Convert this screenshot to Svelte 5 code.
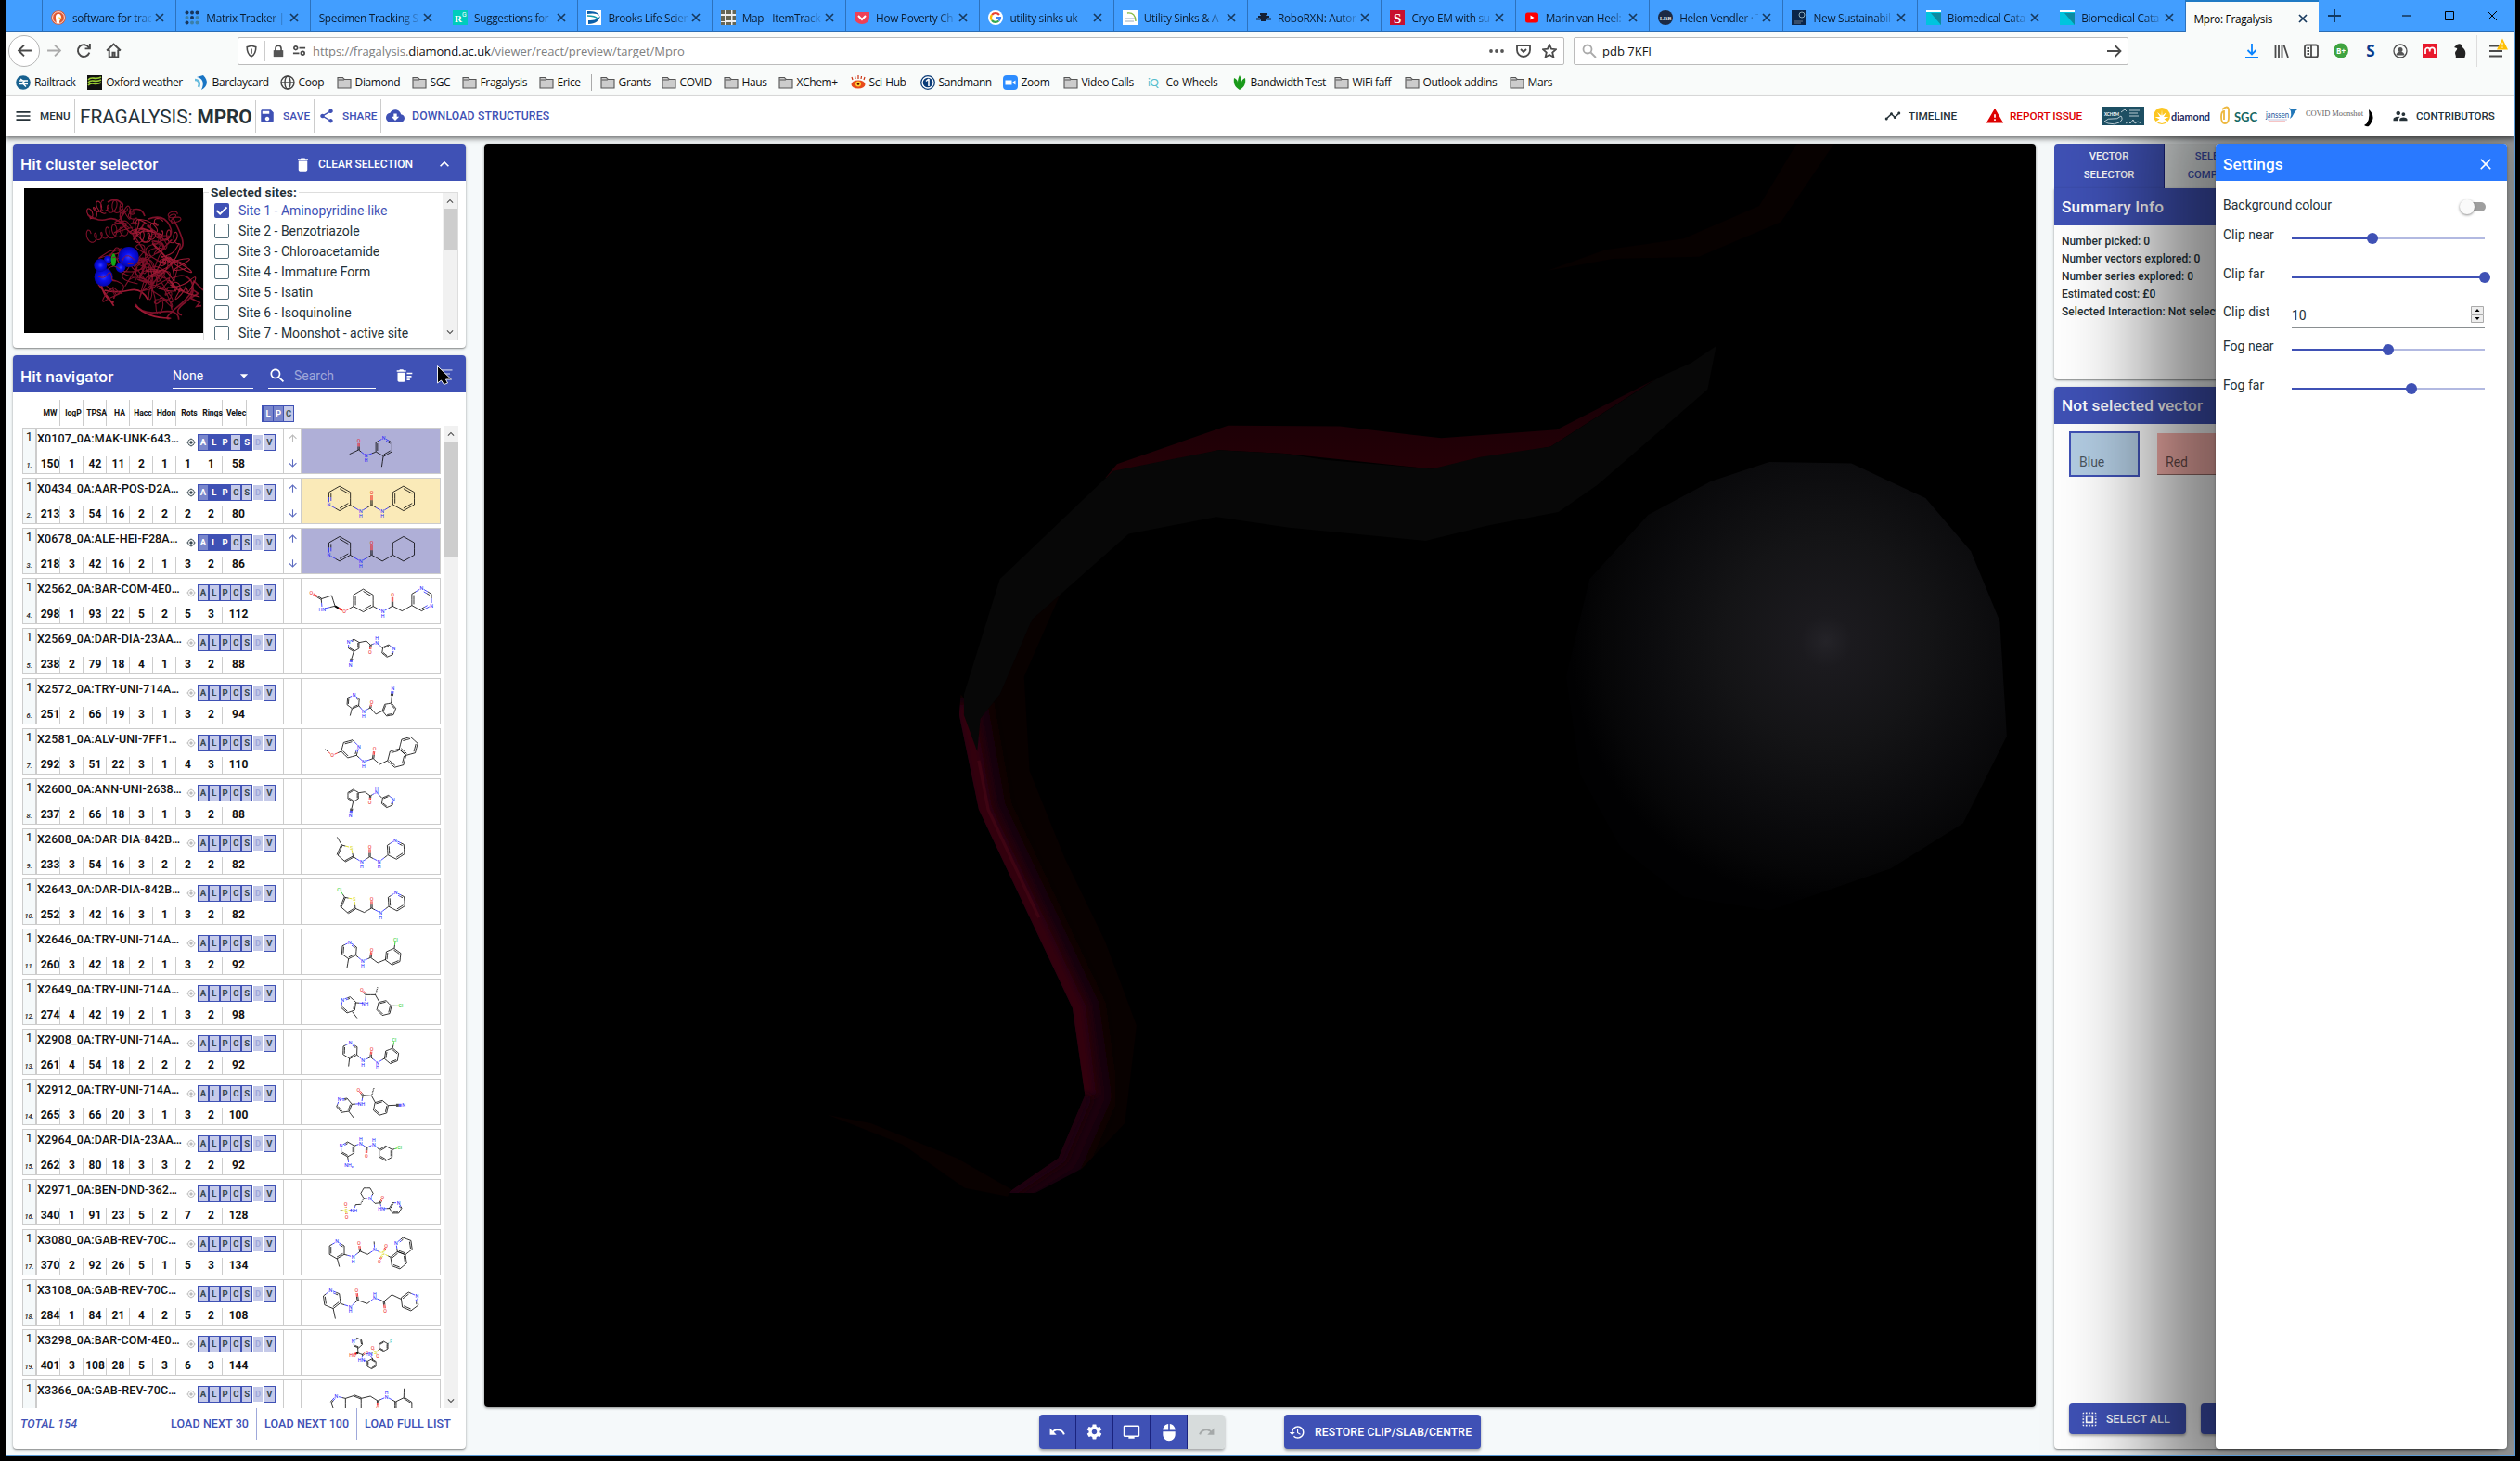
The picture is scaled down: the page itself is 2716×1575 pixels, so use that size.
<script>
  const P = {
    undo: 'M12.5 8c-2.65 0-5.05.99-6.9 2.6L2 7v9h9l-3.62-3.62c1.39-1.16 3.16-1.88 5.12-1.88 3.54 0 6.55 2.31 7.6 5.5l2.37-.78C21.08 11.03 17.15 8 12.5 8z',
    redo: 'M18.4 10.6C16.55 8.99 14.15 8 11.5 8c-4.65 0-8.58 3.03-9.96 7.22L3.9 16c1.05-3.19 4.05-5.5 7.6-5.5 1.95 0 3.73.72 5.12 1.88L13 16h9V7l-3.6 3.6z',
    settings: 'M19.43 12.98c.04-.32.07-.64.07-.98s-.03-.66-.07-.98l2.11-1.65c.19-.15.24-.42.12-.64l-2-3.46c-.12-.22-.39-.3-.61-.22l-2.49 1c-.52-.4-1.08-.73-1.69-.98l-.38-2.65C14.46 2.18 14.25 2 14 2h-4c-.25 0-.46.18-.49.42l-.38 2.65c-.61.25-1.17.59-1.69.98l-2.49-1c-.23-.09-.49 0-.61.22l-2 3.46c-.13.22-.07.49.12.64l2.11 1.65c-.04.32-.07.65-.07.98s.03.66.07.98l-2.11 1.65c-.19.15-.24.42-.12.64l2 3.46c.12.22.39.3.61.22l2.49-1c.52.4 1.08.73 1.69.98l.38 2.65c.03.24.24.42.49.42h4c.25 0 .46-.18.49-.42l.38-2.65c.61-.25 1.17-.59 1.69-.98l2.49 1c.23.09.49 0 .61-.22l2-3.46c.12-.22.07-.49-.12-.64l-2.11-1.65zM12 15.5c-1.93 0-3.5-1.57-3.5-3.5s1.57-3.5 3.5-3.5 3.5 1.57 3.5 3.5-1.57 3.5-3.5 3.5z',
    tv: 'M21 3H3c-1.1 0-2 .9-2 2v12c0 1.1.9 2 2 2h5v2h8v-2h5c1.1 0 1.99-.9 1.99-2L23 5c0-1.1-.9-2-2-2zm0 14H3V5h18v12z',
    mouse: 'M13 1.07V9h7c0-4.08-3.05-7.44-7-7.93zM4 15c0 4.42 3.58 8 8 8s8-3.58 8-8v-4H4v4zm7-13.93C7.05 1.56 4 4.92 4 9h7V1.07z',
    restore: 'M13 3c-4.97 0-9 4.03-9 9H1l3.89 3.89.07.14L9 12H6c0-3.87 3.13-7 7-7s7 3.13 7 7-3.13 7-7 7c-1.93 0-3.68-.79-4.94-2.06l-1.42 1.42C8.27 19.99 10.51 21 13 21c4.97 0 9-4.03 9-9s-4.03-9-9-9zm-1 5v5l4.28 2.54.72-1.21-3.5-2.08V8H12z',
    selectAll: 'M3 5h2V3c-1.1 0-2 .9-2 2zm0 8h2v-2H3v2zm4 8h2v-2H7v2zM3 9h2V7H3v2zm10-6h-2v2h2V3zm6 0v2h2c0-1.1-.9-2-2-2zM5 21v-2H3c0 1.1.9 2 2 2zm-2-4h2v-2H3v2zM9 3H7v2h2V3zm2 18h2v-2h-2v2zm8-8h2v-2h-2v2zm0 8c1.1 0 2-.9 2-2h-2v2zm0-12h2V7h-2v2zm0 8h2v-2h-2v2zm-4 4h2v-2h-2v2zm0-16h2V3h-2v2zM7 17h10V7H7v10zm2-8h6v6H9V9z',
    menu: 'M3 18h18v-2H3v2zm0-5h18v-2H3v2zm0-7v2h18V6H3z',
    save: 'M17 3H5c-1.11 0-2 .9-2 2v14c0 1.1.89 2 2 2h14c1.1 0 2-.9 2-2V7l-4-4zm-5 16c-1.66 0-3-1.34-3-3s1.34-3 3-3 3 1.34 3 3-1.34 3-3 3zm3-10H5V5h10v4z',
    share: 'M18 16.08c-.76 0-1.44.3-1.96.77L8.91 12.7c.05-.23.09-.46.09-.7s-.04-.47-.09-.7l7.05-4.11c.54.5 1.25.81 2.04.81 1.66 0 3-1.34 3-3s-1.34-3-3-3-3 1.34-3 3c0 .24.04.47.09.7L8.04 9.81C7.5 9.31 6.79 9 6 9c-1.66 0-3 1.34-3 3s1.34 3 3 3c.79 0 1.5-.31 2.04-.81l7.12 4.16c-.05.21-.08.43-.08.65 0 1.61 1.31 2.92 2.92 2.92 1.61 0 2.92-1.31 2.92-2.92s-1.31-2.92-2.92-2.92z',
    cloud: 'M19.35 10.04C18.67 6.59 15.64 4 12 4 9.11 4 6.6 5.64 5.35 8.04 2.34 8.36 0 10.91 0 14c0 3.31 2.69 6 6 6h13c2.76 0 5-2.24 5-5 0-2.64-2.05-4.78-4.65-4.96zM17 13l-5 5-5-5h3V9h4v4h3z',
    trash: 'M6 19c0 1.1.9 2 2 2h8c1.1 0 2-.9 2-2V7H6v12zM19 4h-3.5l-1-1h-5l-1 1H5v2h14V4z',
    sweep: 'M15 16h4v2h-4zm0-8h7v2h-7zm0 4h6v2h-6zM3 18c0 1.1.9 2 2 2h6c1.1 0 2-.9 2-2V8H3v10zM14 5h-3l-1-1H6L5 5H2v2h12z',
    filter: 'M3 8h18V6H3zM6 13h12v-2H6zM10 18h4v-2h-4z',
    search: 'M15.5 14h-.79l-.28-.27C15.41 12.59 16 11.11 16 9.5 16 5.91 13.09 3 9.5 3S3 5.91 3 9.5 5.91 16 9.5 16c1.61 0 3.09-.59 4.23-1.57l.27.28v.79l5 4.99L20.49 19l-4.99-5zm-6 0C7.01 14 5 11.99 5 9.5S7.01 5 9.5 5 14 7.01 14 9.5 11.99 14 9.5 14z',
    less: 'M12 8l-6 6 1.41 1.41L12 10.83l4.59 4.58L18 14z',
    more: 'M16.59 8.59L12 13.17 7.41 8.59 6 10l6 6 6-6z',
    drop: 'M7 10l5 5 5-5z',
    close: 'M19 6.41L17.59 5 12 10.59 6.41 5 5 6.41 10.59 12 5 17.59 6.41 19 12 13.41 17.59 19 19 17.59 13.41 12z',
    up: 'M4 12l1.41 1.41L11 7.83V20h2V7.83l5.58 5.59L20 12l-8-8-8 8z',
    down: 'M20 12l-1.41-1.41L13 16.17V4h-2v12.17l-5.58-5.59L4 12l8 8 8-8z',
    target: 'M12 8c-2.21 0-4 1.79-4 4s1.79 4 4 4 4-1.79 4-4-1.79-4-4-4zm8.94 3c-.46-4.17-3.77-7.48-7.94-7.94V1h-2v2.06C6.83 3.52 3.52 6.83 3.06 11H1v2h2.06c.46 4.17 3.77 7.48 7.94 7.94V23h2v-2.06c4.17-.46 7.48-3.77 7.94-7.94H23v-2h-2.06zM12 19c-3.87 0-7-3.13-7-7s3.13-7 7-7 7 3.13 7 7-3.13 7-7 7z',
    timeline: 'M23 8c0 1.1-.9 2-2 2-.18 0-.35-.02-.51-.07l-3.56 3.55c.05.16.07.34.07.52 0 1.1-.9 2-2 2s-2-.9-2-2c0-.18.02-.36.07-.52l-2.55-2.55c-.16.05-.34.07-.52.07s-.36-.02-.52-.07l-4.55 4.56c.05.16.07.33.07.51 0 1.1-.9 2-2 2s-2-.9-2-2 .9-2 2-2c.18 0 .35.02.51.07l4.56-4.55C8.02 9.36 8 9.18 8 9c0-1.1.9-2 2-2s2 .9 2 2c0 .18-.02.36-.07.52l2.55 2.55c.16-.05.34-.07.52-.07s.36.02.52.07l3.55-3.56C19.02 8.35 19 8.18 19 8c0-1.1.9-2 2-2s2 .9 2 2z',
    warning: 'M1 21h22L12 2 1 21zm12-3h-2v-2h2v2zm0-4h-2v-4h2v4z',
    people: 'M16.5 12c1.38 0 2.49-1.12 2.49-2.5S17.88 7 16.5 7C15.12 7 14 8.12 14 9.5s1.12 2.5 2.5 2.5zM9 11c1.66 0 2.99-1.34 2.99-3S10.66 5 9 5C7.34 5 6 6.34 6 8s1.34 3 3 3zm7.5 3c-1.83 0-5.5.92-5.5 2.75V19h11v-2.25c0-1.83-3.67-2.75-5.5-2.75zM9 13c-2.33 0-7 1.17-7 3.5V19h7v-2.25c0-.85.33-2.34 2.37-3.47C10.5 13.1 9.66 13 9 13z'
  };

  const tabs = [
    ['software for trac', 'duck'], ['Matrix Tracker | L', 'matrix'], ['Specimen Tracking S', ''], ['Suggestions for ', 'rg'],
    ['Brooks Life Scien', 'brooks'], ['Map - ItemTrack', 'map'], ['How Poverty Ch', 'pocket'], ['utility sinks uk - ', 'google'],
    ['Utility Sinks & A', 'sink'], ['RoboRXN: Auton', 'robot'], ['Cryo-EM with su', 'sred'], ['Marin van Heel:', 'yt'],
    ['Helen Vendler · T', 'lrb'], ['New Sustainabil', 'navy'], ['Biomedical Cata', 'bio'], ['Biomedical Cata', 'bio'], ['Mpro: Fragalysis', '']
  ];

  const bookmarks = [
    ['Railtrack', 'rail', 77.2], ['Oxford weather', 'ox', 114.4], ['Barclaycard', 'bar', 93], ['Coop', 'globe', 61], ['Diamond', 'folder', 81],
    ['SGC', 'folder', 54], ['Fragalysis', 'folder', 83], ['Erice', 'folder', 66], ['Grants', 'folder', 66, true], ['COVID', 'folder', 67],
    ['Haus', 'folder', 59], ['XChem+', 'folder', 78], ['Sci-Hub', 'sci', 75], ['Sandmann', 'sand', 89], ['Zoom', 'zoom', 65],
    ['Video Calls', 'folder', 91], ['Co-Wheels', 'iq', 91], ['Bandwidth Test', 'band', 110], ['WiFi faff', 'folder', 76],
    ['Outlook addins', 'folder', 113], ['Mars', 'folder', 60]
  ];

  const sites = ['Aminopyridine-like', 'Benzotriazole', 'Chloroacetamide', 'Immature Form', 'Isatin', 'Isoquinoline', 'Moonshot - active site'];
  const heads = ['MW', 'logP', 'TPSA', 'HA', 'Hacc', 'Hdon', 'Rots', 'Rings', 'Velec'];

  // Each hit: label, properties, first y of the drawing's canvas, drawing.
  // Drawing tokens: "@cx,cy,r,angle,atoms" is a ring; "a,b =Oc,d" is a chain of bonded atoms.
  const hits = [
    ['X0107_0A:MAK-UNK-643…', [150, 1, 42, 11, 2, 1, 1, 1, 58], 933, ['@1242,996,30,-90,NCCCCC', '1130,1019 1160,1005 =O1160,975', '1160,1005 Nh1184,1024 1215,1012', '1240,1026 1235,1060']],
    ['X0434_0A:AAR-POS-D2A…', [213, 3, 54, 16, 2, 2, 2, 2, 80], -45, ['@1098,22,40,150,NCCCCC', '1132,43 Nh1167,64 1202,43 =O1202,4', '1202,43 Nh1237,64 1271,43', '@1306,22,40,150,CCCCCC']],
    ['X0678_0A:ALE-HEI-F28A…', [218, 3, 42, 16, 2, 1, 3, 2, 86], 117, ['@1098,185,40,150,NCCCCC', '1132,205 Nh1167,226 1202,205 =O1202,166', '1202,205 1237,225 1271,205', '@1306,185,40,150,cccccc']],
    ['X2562_0A:BAR-COM-4E0…', [298, 1, 93, 22, 5, 2, 5, 3, 112], 279, ['O1005,327 =1038,347 1072,336 1083,370 HN1041,380 1038,347', '1083,370 !O1113,388 1143,371', '@1175,352,37,-90,CCCCCC', '1207,371 Nh1239,388 1270,370 =O1270,333', '1270,370 1301,386 1333,368', '@1365,349,37,-90,NCNCCC']],
    ['X2569_0A:DAR-DIA-23AA…', [238, 2, 79, 18, 4, 1, 3, 2, 88], 441, ['@1144,497,20,210,NCCCCC', '1161,488 1185,483 1199,496 =O1197,518', '1199,496 Nu1219,488 1236,505', '@1255,515,20,-22,NCCCCC', '1144,517 1137,540 #N1133,560']],
    ['X2572_0A:TRY-UNI-714A…', [251, 2, 66, 19, 3, 1, 3, 2, 94], 603, ['@1142,680,22,-83,NCCCCC', '1138,702 1132,725', '1160,692 Nh1176,711 1198,699 =O1202,681', '1198,699 1216,720 1238,709', '@1259,705,22,-70,CCCCCC', '1266,684 1268,660 #N1271,637']],
    ['X2581_0A:ALV-UNI-7FF1…', [292, 3, 51, 22, 3, 1, 4, 3, 110], 765, ['@1132,832,30,-15,NCCCCC', '1103,840 O1074,853 1051,833', '1153,853 Nh1176,874 1207,863 =O1211,832', '1207,863 1229,882 1254,870', '@1284,862,31,-16,CCCCCC', '@1322,823,31,-16,CCCCCC']],
    ['X2600_0A:ANN-UNI-2638…', [237, 2, 66, 18, 3, 1, 3, 2, 88], 927, ['@1142,983,20,210,CCCCCC', '1160,974 1180,971 1198,984 =O1196,1004', '1198,984 Nu1218,972 1235,990', '@1254,1002,20,-22,NCCCCC', '1142,1003 1137,1025 #N1133,1047']],
    ['X2608_0A:DAR-DIA-842B…', [233, 3, 54, 16, 3, 2, 2, 2, 82], 39, ['1142,131 S1136,101 1105,93 =1091,125 1115,146 =1142,131 Nh1170,148 1196,131 =O1196,98', '1105,93 1090,67', '1196,131 Nh1227,147 1254,126', '@1281,108,31,-93,NCCCCC']],
    ['X2643_0A:DAR-DIA-842B…', [252, 3, 42, 16, 3, 1, 3, 2, 82], 201, ['Cl1097,236 1115,262 =1102,293 1125,313 =1149,298 S1146,268 1115,262', '1149,298 1178,311 1202,297 =O1202,266', '1202,297 Nh1231,312 1257,292', '@1283,276,30,-93,NCCCCC']],
    ['X2646_0A:TRY-UNI-714A…', [260, 3, 42, 18, 2, 1, 3, 2, 92], 363, ['@1129,434,27,-85,NCCCCC', '1127,461 1122,490', '1151,450 Nh1173,468 1199,457 =O1202,431', '1199,457 1222,474 1248,463', '@1272,454,27,-83,CCCCCC', '1276,427 Cl1280,398']],
    ['X2649_0A:TRY-UNI-714A…', [274, 4, 42, 19, 2, 1, 3, 2, 98], 525, ['@1127,610,26,220,NCCCCC', '1151,603 NH1181,605 1184,577 =O1170,560', '1184,577 1214,577 ~1222,552', '1214,577 1227,600', '@1243,620,25,-15,CCCCCC', '1267,613 Cl1297,613', '1139,632 1155,653']],
    ['X2908_0A:TRY-UNI-714A…', [261, 4, 54, 18, 2, 2, 2, 2, 92], 687, ['@1132,758,26,-88,NCCCCC', '1155,772 Nh1174,790 1199,779 =O1202,753', '1199,779 Nh1221,797 1244,783', '@1267,775,25,-80,CCCCCC', '1271,749 Cl1276,722', '1130,783 1127,809']],
    ['X2912_0A:TRY-UNI-714A…', [265, 3, 66, 20, 3, 1, 3, 2, 100], 849, ['@1113,935,25,230,NCCCCC', '1138,931 NH1169,929 1174,902 =O1159,884', '1174,902 1202,904 ~1210,877', '1202,904 1214,926', '@1232,943,25,-18,CCCCCC', '1256,935 1282,934 #N1307,934', '1128,955 1144,976']],
    ['X2964_0A:DAR-DIA-23AA…', [262, 3, 80, 18, 3, 3, 2, 2, 92], -9, ['@1124,57,24,210,NCCCCC', '1124,81 NH₂1128,107', '1145,46 Nu1167,38 1186,52 =O1185,77', '1186,52 Nu1209,41 1227,58', '@1248,70,24,210,CCCCCC', '1269,58 Cl1293,51']],
    ['X2971_0A:BEN-DND-362…', [340, 1, 91, 23, 5, 2, 7, 2, 128], 153, ['@1187,199,20,60,Nccccc', '1177,216 ~1166,235 1150,236 NH1144,254 S1119,254 =O1118,235', 'S1119,254 =O1121,275', 'S1119,254 1100,255', 'N1197,216 1213,232 1230,230 =O1238,213', '1230,230 HN1234,249 1261,248', '@1280,247,20,-60,NCCCCC']],
    ['X3080_0A:GAB-REV-70C…', [370, 2, 92, 26, 5, 1, 5, 3, 134], 315, ['@1089,383,28,-90,NCCCCC', '1090,410 1097,437', '1113,397 Nh1142,405 1165,387 =O1161,361', '1165,387 1189,397 N1212,382 1210,355', 'N1212,382 S1240,394 =O1249,368', 'S1240,394 =O1227,419', 'S1240,394 1264,406', '@1290,416,28,201,CCCCCC', '@1308,370,28,201,NCCCCC']],
    ['X3108_0A:GAB-REV-70C…', [284, 1, 84, 21, 4, 2, 5, 2, 108], 477, ['@1073,542,30,-98,NCCCCC', '1077,572 1084,605', '1101,556 Nh1133,566 1157,545 =O1153,514', '1157,545 1188,556 Nu1212,537 1242,549 =O1246,579', '1242,549 1268,527 1297,541', '@1326,549,30,-37,NCCCCC']],
    ['X3298_0A:BAR-COM-4E0…', [401, 3, 108, 28, 5, 3, 6, 3, 144], 639, ['@1157,683,16,200,NCCCCC', '1157,699 1158,716 !HO1140,722', '1158,716 1173,722 =O1187,713', '1173,722 HN1169,738 1188,742', '@1202,751,16,-90,CCCCCC', '1207,736 HN1194,720 S1214,713 =O1205,698', 'S1214,713 =O1222,726', 'S1214,713 1227,704', '@1241,694,16,-30,CCCCCC', '1255,686 F1265,677']],
    ['X3366_0A:GAB-REV-70C…', ['', '', '', '', '', '', '', '', ''], 801, ['N1087,855 1117,862 1145,853 =1168,862 1168,900', 'N1087,855 =1070,875 1077,895', '1117,862 1117,900', '1168,862 1198,855 1222,870 =O1222,895', '1222,870 Nu1251,857 1280,873 =1280,900', '1280,873 1307,860 1308,830', '1307,860 =1333,877 1333,900']]
  ];

  const atomColor = (e) => (e.includes('N') ? '#1a1aff' : e.startsWith('Cl') ? '#00c800' : e.includes('O') ? '#ee1111' : e === 'S' ? '#d8d800' : e === 'F' ? '#33cccc' : '#000');

  function depict(tokens) {
    const lines = [];
    const labels = new Map();
    const seg = (a, b, off, w = 2.4, dash = '') => {
      const dx = b.x - a.x, dy = b.y - a.y, d = Math.hypot(dx, dy) || 1;
      const ux = dx / d, uy = dy / d, nx = -uy * off, ny = ux * off;
      const sa = a.e ? 8 : 0, sb = b.e ? 8 : 0;
      const x1 = a.x + ux * sa + nx, y1 = a.y + uy * sa + ny, x2 = b.x - ux * sb + nx, y2 = b.y - uy * sb + ny;
      const mx = (x1 + x2) / 2, my = (y1 + y2) / 2;
      lines.push([x1, y1, mx, my, atomColor(a.e), w, dash], [mx, my, x2, y2, atomColor(b.e), w, dash]);
    };
    const label = (p) => { if (p.e) labels.set(p.x + ',' + p.y, p); };
    for (const t of tokens) {
      if (t[0] === '@') {
        const [cx, cy, r, ang, els] = t.slice(1).split(',');
        const pts = [...els].map((e, i) => {
          const a = ((+ang + 60 * i) * Math.PI) / 180;
          return { x: Math.round(+cx + r * Math.cos(a)), y: Math.round(+cy + r * Math.sin(a)), e: e.toUpperCase() === 'C' ? '' : e };
        });
        pts.forEach((p, i) => {
          const q = pts[(i + 1) % 6];
          label(p);
          seg(p, q, 0);
          if (i % 2 === 0 && !els.includes('c')) {
            const s = (v) => ({ x: +cx + (v.x - cx) * 0.8, y: +cy + (v.y - cy) * 0.8, e: v.e });
            seg(s(p), s(q), 0);
          }
        });
      } else {
        let prev = null;
        for (const w of t.split(' ')) {
          const m = w.match(/^([=#!~]?)([A-Za-z₂]*)([\d.]+),([\d.]+)$/);
          const p = { x: +m[3], y: +m[4], e: m[2] };
          label(p);
          if (prev) {
            if (m[1] === '=') { seg(prev, p, 2); seg(prev, p, -2); }
            else if (m[1] === '#') { seg(prev, p, 3); seg(prev, p, 0); seg(prev, p, -3); }
            else if (m[1] === '!') seg(prev, p, 0, 6);
            else if (m[1] === '~') seg(prev, p, 0, 4, '2 3');
            else seg(prev, p, 0);
          }
          prev = p;
        }
      }
    }
    const texts = [];
    for (const p of labels.values()) {
      const c = atomColor(p.e);
      if (p.e === 'Nh') texts.push([p.x, p.y, 'N', c], [p.x, p.y + 14, 'H', c]);
      else if (p.e === 'Nu') texts.push([p.x, p.y, 'N', c], [p.x, p.y - 13, 'H', c]);
      else texts.push([p.x, p.y, p.e, c]);
    }
    return { lines, texts };
  }
  const drawings = hits.map((h) => depict(h[3]));

  function letterState(row, l) {
    if (l === 'D') return 'ghost';
    if (row < 3 && l === 'A') return 'half';
    if (row < 3 && (l === 'L' || l === 'P')) return 'on';
    if (row === 0 && l === 'S') return 'on';
    return 'box';
  }

  // Ribbon drawing of the protein thumbnail.
  let seed = 11;
  const rnd = () => ((seed = (seed * 16807) % 2147483647) / 2147483647);
  function coil(x1, y1, x2, y2, amp, loops) {
    let d = '';
    const n = loops * 14, dx = x2 - x1, dy = y2 - y1, L = Math.hypot(dx, dy), ph = rnd() * 6;
    for (let i = 0; i <= n; i++) {
      const t = i / n, a = t * loops * 2 * Math.PI + ph, k = amp * (0.8 + 0.3 * Math.sin(t * 9 + ph));
      const u = t * L + Math.sin(a) * k * 0.6, v = Math.cos(a) * k + Math.sin(t * 7) * 6;
      const x = x1 + (dx / L) * u - (dy / L) * v, y = y1 + (dy / L) * u + (dx / L) * v;
      d += (i ? 'L' : 'M') + x.toFixed(1) + ' ' + y.toFixed(1);
    }
    return d;
  }
  function wander(cx, cy, r, n) {
    const q = () => (rnd() - 0.5) * 2 * r;
    let d = `M${(cx + q() / 2).toFixed(0)} ${(cy + q() / 2).toFixed(0)}`;
    for (let i = 0; i < n; i++) d += `S${(cx + q()).toFixed(0)} ${(cy + q()).toFixed(0)} ${(cx + q()).toFixed(0)} ${(cy + q()).toFixed(0)}`;
    return d;
  }
  const ribbons = [
    coil(205, 85, 255, 60, 20, 3), coil(250, 55, 330, 70, 20, 4), coil(205, 155, 330, 140, 20, 6), coil(350, 150, 500, 160, 18, 7), coil(350, 70, 355, 120, 12, 3),
    coil(480, 80, 485, 110, 18, 3), coil(440, 100, 400, 150, 14, 3),
    'M205 85Q240 110 270 100T330 130T390 110M480 95Q500 130 510 160T500 200M350 70Q380 60 390 90M270 45Q300 25 320 55M400 100Q450 80 470 120T440 170',
    'M579 330l-30 -30 -8 25 22 15 -25 15 30 15 -10 12 15 -2M480 290Q520 270 540 300T500 380T475 420M360 375Q380 410 440 400T500 425M540 300Q560 340 520 370T510 410',
    'M240 310Q270 350 290 380M260 330Q300 340 340 330T400 360M360 380Q400 420 470 420M250 300Q250 350 290 370',
    wander(400, 220, 56, 14), wander(430, 290, 56, 16), wander(470, 240, 52, 15), wander(360, 270, 42, 12), wander(300, 210, 36, 8), wander(500, 330, 42, 10), wander(300, 330, 38, 7), wander(455, 350, 36, 8), wander(390, 120, 38, 8), wander(330, 110, 44, 8), wander(440, 160, 40, 8)
  ];

  const sliders = [['Clip near', 42], ['Clip far', 100], ['Fog near', 50], ['Fog far', 62]];
</script>

{#snippet icon(name, size)}
  <svg class="ic" width={size} height={size} viewBox="0 0 24 24" fill="currentColor"><path d={P[name]} /></svg>
{/snippet}

{#snippet fav(k)}
  <svg class="fav" viewBox="0 0 16 16" width="16" height="16">
    {#if k === 'duck'}<circle cx="8" cy="8" r="7.8" fill="#de5833" /><circle cx="8" cy="8" r="6.4" fill="none" stroke="#fff" stroke-width=".8" /><path d="M6 14C5 9 4 5 7 4s4 2 4 4-2 2-2 6z" fill="#fff" /><path d="M8 7.5l4 .5-3 1.5z" fill="#fc3" />
    {:else if k === 'matrix'}<g fill="#17365c"><circle cx="2.5" cy="2.5" r="2" /><circle cx="8" cy="2.5" r="2" /><circle cx="13.5" cy="2.5" r="2" /><circle cx="8" cy="8" r="2" /><circle cx="2.5" cy="13.5" r="2" /></g><g fill="#3a7fa8"><circle cx="2.5" cy="8" r="2" /><circle cx="13.5" cy="8" r="2" /><circle cx="8" cy="13.5" r="2" /><circle cx="13.5" cy="13.5" r="2" /></g>
    {:else if k === 'rg'}<path fill="#0cb" d="M0 0h16v16H0z" /><text x="2" y="13" font-size="11" fill="#fff" font-family="Liberation Serif" font-weight="bold">R</text><text x="10" y="7" font-size="7" fill="#fff" font-family="Roboto">G</text>
    {:else if k === 'brooks'}<path fill="#fff" d="M0 0h16v16H0z" /><path d="M1 1c7 0 12 1 13 5-2-3-8-3-13-2zM2 15c8 0 12-4 13-9-3 4-6 5-13 5z" fill="#0a5ea8" /><path d="M1 6c5 0 9 1 11 3" stroke="#19a" stroke-width="1.5" fill="none" />
    {:else if k === 'map'}<path fill="#eee" d="M0 0h16v16H0z" /><path fill="#665" d="M0 0h4v4H0zM6 0h10v4H6zM0 6h4v6H0zM6 6h10v5H6zM0 13h4v3H0zM6 13h10v3H6z" /><path fill="#eee" d="M11 0h1.5v16H11z" />
    {:else if k === 'pocket'}<path fill="#ef4056" d="M0 2h16v6a8 7 0 0 1-16 0z" /><path d="M4 6l4 4 4-4" stroke="#fff" stroke-width="2" fill="none" />
    {:else if k === 'google'}<circle cx="8" cy="8" r="8" fill="#fff" /><path d="M12 5A5 5 0 0 0 4 5" stroke="#ea4335" stroke-width="2.2" fill="none" /><path d="M4 5a5 5 0 0 0 0 6" stroke="#fbbc05" stroke-width="2.2" fill="none" /><path d="M4 11a5 5 0 0 0 7.5 .5" stroke="#34a853" stroke-width="2.2" fill="none" /><path d="M11.5 11.5A5 5 0 0 0 13 8H8" stroke="#4285f4" stroke-width="2.2" fill="none" />
    {:else if k === 'sink'}<path fill="#fff" d="M0 0h16v16H0z" /><path d="M5 3c6-1 9 3 9 9" stroke="#8b4" stroke-width="1.4" fill="none" /><path d="M2 9h11M3 12h9" stroke="#9ab" />
    {:else if k === 'robot'}<path d="M4 4h8M2 7h12M0 9.5h4m8 0h4M5 11h6" stroke="#152035" stroke-width="2" /><circle cx="8" cy="8" r="4" fill="#152035" />
    {:else if k === 'sred'}<path fill="#c8102e" d="M0 0h16v16H0z" /><text x="8" y="13.5" text-anchor="middle" font-size="15" fill="#fff" font-family="Liberation Serif" font-weight="bold">S</text>
    {:else if k === 'yt'}<rect x="1" y="2.5" width="14" height="11" rx="2.5" fill="red" /><path d="M6.5 5.5l4 2.5-4 2.5z" fill="#fff" />
    {:else if k === 'lrb'}<circle cx="8" cy="8" r="8" fill="#1c2a44" /><text x="8" y="10.5" text-anchor="middle" font-size="6.5" fill="#ddd" font-family="Liberation Serif" font-weight="bold">LRB</text>
    {:else if k === 'navy'}<path fill="#0a2549" d="M0 0h16v16H0z" /><circle cx="11" cy="5" r="3" fill="none" stroke="#8ab" /><path d="M3 12h9M3 14h7" stroke="#678" />
    {:else if k === 'bio'}<path fill="#00c4de" d="M0 0h16v16H0z" /><path fill="#fff" d="M0 0h16v2H0z" /><path fill="#0d8aa0" d="M5 3h11v13z" />
    {:else if k === 'rail'}<circle cx="8" cy="8" r="7.8" fill="#17618f" /><path d="M3 6h10M3 9.5h10M6 9.5l4-3.5M5 4l3 2M8 9.5l3 3" stroke="#fff" stroke-width="1.4" fill="none" />
    {:else if k === 'ox'}<path fill="#111" d="M0 0h16v16H0z" /><path d="M1 5c4-5 7 1 14-3M1 8c4-5 7 1 14-3M1 11c4-5 7 1 14-3" stroke="#9c3" stroke-width="1.6" fill="none" />
    {:else if k === 'bar'}<path d="M3 2c6 1 9 6 5 14 7-4 8-10 2-16z" fill="#1a75c4" /><path d="M1 5c4 0 6 3 4 8" stroke="#6bd" stroke-width="2.5" fill="none" />
    {:else if k === 'globe'}<g fill="none" stroke="#444" stroke-width="1.4"><circle cx="8" cy="8" r="7" /><ellipse cx="8" cy="8" rx="3" ry="7" /><path d="M1 8h14" /></g>
    {:else if k === 'folder'}<path d="M1 2.5h5.5l1.5 2h7v9.5H1z" fill="#ccc" stroke="#555" stroke-width="1.1" /><path d="M1.5 5h6l1.5-1" fill="none" stroke="#555" />
    {:else if k === 'sci'}<ellipse cx="8" cy="10" rx="7.5" ry="4.5" fill="#e84a1a" /><circle cx="8" cy="9.5" r="3" fill="#fc3" /><circle cx="8" cy="9.5" r="1.3" fill="#500" /><path d="M2 5L1 2m4 2L4.5 1M8 4V0m3 4l.5-3M14 5l1-3" stroke="#c31" stroke-width="1.2" />
    {:else if k === 'sand'}<circle cx="8" cy="8" r="7.3" fill="#fff" stroke="#0b3c78" stroke-width="1.3" /><circle cx="8" cy="8" r="5.3" fill="#0b3c78" /><path d="M9 4v8M9 4L6 6.5" stroke="#fff" stroke-width="1.6" />
    {:else if k === 'zoom'}<rect width="16" height="16" rx="4" fill="#2d8cff" /><path fill="#fff" d="M2.5 5.5h7v5h-7zM10.5 7.5l3-2v5l-3-2z" />
    {:else if k === 'iq'}<text x="0" y="12" font-size="12" fill="#5bc" font-family="Lato">iQ</text>
    {:else if k === 'band'}<path d="M8 16C3 13 1 9 2 3c3 1 4 3 4 5 0-4 1-6 2-8 1 2 2 4 2 8 0-2 1-4 4-5 1 6-1 10-6 13z" fill="#1a9a1a" />
    {/if}
  </svg>
{/snippet}

<div class="screen">
  <div class="window">
    <div class="tabbar">
      {#each tabs as t, i}
        <div class="tab" class:active={i === 16}>
          {#if t[1]}{@render fav(t[1])}{/if}
          <span class="tt" class:full={i === 16}>{t[0]}</span>
          <svg class="tx" viewBox="0 0 10 10" width="10" height="10"><path d="M1 1l8 8M9 1l-8 8" /></svg>
        </div>
      {/each}
      <div class="newtab"><svg viewBox="0 0 14 14" width="14" height="14"><path d="M7 0v14M0 7h14" stroke="#123a63" stroke-width="2" /></svg></div>
      <div class="winbtns">
        <svg viewBox="0 0 10 10" width="10" height="10"><path d="M0 5h10" /></svg>
        <svg viewBox="0 0 10 10" width="10" height="10"><path d="M.5 .5h9v9h-9z" fill="none" /></svg>
        <svg viewBox="0 0 10 10" width="10" height="10"><path d="M0 0l10 10M10 0L0 10" /></svg>
      </div>
    </div>

    <div class="toolbar">
      <div class="nav">
        <span class="back"><svg viewBox="0 0 16 16" width="17" height="17"><path d="M15 8H2M7.5 2.5L2 8l5.5 5.5" /></svg></span>
        <svg class="dim" viewBox="0 0 16 16" width="17" height="17"><path d="M1 8h13M8.5 2.5L14 8l-5.5 5.5" /></svg>
        <svg viewBox="0 0 16 16" width="17" height="17"><path d="M13.5 10A6 6 0 1 1 13 5M14 1v5H9" /></svg>
        <svg viewBox="0 0 16 16" width="17" height="17"><path d="M1 8l7-6.5L15 8M3.5 7v7.5h9V7M7 14v-4h2v4" /></svg>
      </div>
      <div class="urlbar">
        <svg viewBox="0 0 16 16" width="14" height="16"><path d="M8 1.5L13.5 3c0 6-1 9-5.5 11.5C3.5 12 2.5 9 2.5 3zM8 5v6" /></svg>
        <i class="vline"></i>
        <svg viewBox="0 0 16 16" width="14" height="16"><path d="M2 7h12v8H2z" fill="#555" stroke="none" /><path d="M4.5 8V5a3.5 3.5 0 0 1 7 0v3" /></svg>
        <svg viewBox="0 0 16 16" width="15" height="15"><circle cx="4" cy="5" r="2" /><path d="M8 5h7M1 11h7" /><circle cx="12" cy="11" r="2" /></svg>
        <span class="url">https://fragalysis.<b>diamond.ac.uk</b>/viewer/react/preview/target/Mpro</span>
        <span class="urlend">
          <svg viewBox="0 0 18 16" width="18" height="16"><g fill="#555" stroke="none"><circle cx="3" cy="8" r="1.9" /><circle cx="9" cy="8" r="1.9" /><circle cx="15" cy="8" r="1.9" /></g></svg>
          <svg viewBox="0 0 16 16" width="16" height="16"><path d="M1 2h14v5a7 7 0 0 1-14 0zM5 6l3 3 3-3" /></svg>
          <svg viewBox="0 0 16 16" width="16" height="16"><path d="M8 1l2 4.7 5 .5-3.8 3.3 1.2 5L8 12l-4.4 2.5 1.2-5L1 6.2l5-.5z" /></svg>
        </span>
      </div>
      <div class="searchbar">
        <svg class="dim" viewBox="0 0 16 16" width="16" height="16"><circle cx="6" cy="6" r="4.5" /><path d="M9.5 9.5L15 15" /></svg>
        <span>pdb 7KFI</span>
        <svg class="go" viewBox="0 0 16 16" width="16" height="16"><path d="M0 8h14M8.5 2L14.5 8l-6 6" /></svg>
      </div>
      <div class="tools">
        <svg viewBox="0 0 16 16" width="16" height="16"><path d="M8 0v11M3.5 7L8 11.5 12.5 7M1 15h14" stroke="#0a84ff" /></svg>
        <svg viewBox="0 0 16 16" width="16" height="16"><path d="M1.5 1v14M5 1v14M8.5 1v14M10.5 1.5L15 15" /></svg>
        <svg viewBox="0 0 16 16" width="16" height="16"><rect x="1" y="1.5" width="14" height="13" rx="2" /><path d="M8 2v12M3.5 5h2.5M3.5 8h2.5M3.5 11h2.5" /></svg>
        <svg viewBox="0 0 16 16" width="17" height="17"><circle cx="8" cy="8" r="8" fill="#3fa33f" stroke="none" /><text x="8" y="11" text-anchor="middle" font-size="8" fill="#fff" font-weight="bold">B+</text></svg>
        <svg viewBox="0 0 16 16" width="16" height="16"><text x="8" y="14" text-anchor="middle" font-size="17" fill="#0b3b8c" font-weight="bold">S</text></svg>
        <svg viewBox="0 0 16 16" width="16" height="16"><circle cx="8" cy="8" r="7" stroke-width="1.3" /><circle cx="8" cy="6.5" r="2.5" fill="#555" stroke="none" /><path d="M3.5 12.5a4.5 4 0 0 1 9 0z" fill="#555" stroke="none" /></svg>
        <svg viewBox="0 0 16 16" width="16" height="16"><path fill="#e8192c" stroke="none" d="M0 0h16v16H0z" /><path d="M3 11V7a2.3 2.3 0 0 1 4.7 0v1.5V7A2.3 2.3 0 0 1 13 7v4" stroke="#fff" stroke-width="1.8" /></svg>
        <svg viewBox="0 0 16 16" width="16" height="16"><path d="M5 1c3-2 6 0 6 3 4 3 4 7 2 12H3c2-2 0-4 0-6s3-3 2-5L2 4z" fill="#222" stroke="none" /></svg>
        <i></i>
        <span class="burger">
          <svg viewBox="0 0 14 14" width="12" height="14"><path d="M0 1.5h12M0 7h14M0 12.5h14" /></svg>
          <svg class="warn" viewBox="0 0 14 14" width="12" height="13"><path d="M7 0l7 14H0z" fill="#ffbf00" stroke="none" /><path d="M7 5v4m0 1.5V12" stroke="#fff" stroke-width="1.3" /></svg>
        </span>
      </div>
    </div>

    <div class="bookmarks">
      {#each bookmarks as b}
        <span class="bm" class:sep={b[3]} style="width:{b[2]}px">{@render fav(b[1])}{b[0]}</span>
      {/each}
    </div>

    <header class="app">
      <span class="hb menu">{@render icon('menu', 20)}<em>MENU</em></span>
      <h1>FRAGALYSIS: <b>MPRO</b></h1>
      <span class="hb ind save">{@render icon('save', 18)}<em>SAVE</em></span>
      <span class="hb ind share">{@render icon('share', 18)}<em>SHARE</em></span>
      <span class="hb ind dl">{@render icon('cloud', 20)}<em>DOWNLOAD STRUCTURES</em></span>
      <span class="grow"></span>
      <span class="hb tl">{@render icon('timeline', 18)}<em>TIMELINE</em></span>
      <span class="hb red">{@render icon('warning', 20)}<em>REPORT ISSUE</em></span>
      <svg class="logos" viewBox="0 0 300 24" width="300" height="24" font-family="Lato">
        <rect x="0" y="2" width="45" height="20" fill="#1d4f63" />
        <text x="2" y="12" font-size="6" fill="#fff" font-weight="bold" textLength="16" lengthAdjust="spacingAndGlyphs">XCHEM</text>
        <path d="M2 18q4-4 9-3t9-3q3 4-2 7t-12 1zM20 8l4-3 2 2M25 20l3-2 2 2 3-4 2 4 3-2 4 2" stroke="#dfe9ec" fill="none" stroke-width=".8" />
        <path d="M29 6h11M29 9h9M29 12h10" stroke="#b9cbd2" stroke-width="1" />
        <circle cx="64" cy="12" r="9" fill="#fcc620" /><path d="M64 20L57.5 18l4-2.5-5-2.5 5.5 0-3-5 4.5 3.5L64 5l.5 6.5L69 8l-3 5h5.5l-5 2.5 4 2.5z" fill="#fff" />
        <text x="74" y="17" font-size="12" fill="#212b63" font-weight="bold" textLength="42" lengthAdjust="spacingAndGlyphs">diamond</text>
        <path d="M129 5q6-5 7 0v9q0 6-4 6t-4-7q0-6 3-6v9" stroke="#edb73d" stroke-width="1.8" fill="none" />
        <text x="142" y="18" font-size="12.5" fill="#156763" font-weight="bold" textLength="25" lengthAdjust="spacingAndGlyphs">SGC</text>
        <text x="176" y="14" font-size="9" fill="#24569a" textLength="25" lengthAdjust="spacingAndGlyphs">janssen</text><path d="M201 3q3 2 9 2-3 2-4 5t-4 5q2-4 1-8z" fill="#2277b8" /><path d="M180 18h17" stroke="#e88" /><path d="M178 16h21" stroke="#aac" stroke-width=".7" />
        <text x="219" y="12" font-size="8.5" fill="#666" font-family="Liberation Serif" textLength="62">COVID Moonshot</text>
        <path d="M287 5q9 8 0 18-2 1-5-1 7-3 5-17z" fill="#000" />
      </svg>
      <span class="hb con">{@render icon('people', 18)}<em>CONTRIBUTORS</em></span>
    </header>

    <main>
      <section class="left">
        <div class="panel cluster">
          <div class="ph"><h2>Hit cluster selector</h2><span class="clear">{@render icon('trash', 19)}<em>CLEAR SELECTION</em></span>{@render icon('less', 20)}</div>
          <div class="cbody">
            <svg class="protein" viewBox="0 0 579 468" width="193" height="156">
              <defs><radialGradient id="atom"><stop offset="0" stop-color="#3a40ff" /><stop offset=".4" stop-color="#0a10f0" /><stop offset="1" stop-color="#0505a8" /></radialGradient></defs>
              <rect width="579" height="468" fill="#000" />
              {#each ribbons as d, i}<path {d} fill="none" stroke={i % 3 ? '#7d1029' : '#9c1a34'} stroke-width={i > 6 && i < 10 ? 5 : 3.2} />{/each}
              <g fill="url(#atom)"><circle cx="270" cy="230" r="12" /><circle cx="312" cy="256" r="16" /><circle cx="257" cy="287" r="30" /><circle cx="247" cy="249" r="21" /><circle cx="338" cy="222" r="33" /></g>
              <ellipse cx="289" cy="232" rx="8" ry="21" fill="#15a515" />
              <path d="M315 240q10-35 35-15t-15 20M240 285q20 10 30-8t15 20M285 225q15-10 20 15M270 262q20-20 40 0" stroke="#86163a" stroke-width="3" fill="none" />
            </svg>
            <div class="sites">
              <b class="legend">Selected sites:</b>
              <div class="slist">
                {#each sites as s, i}
                  <div class="site" class:on={i === 0}>
                    <span class="cb">{#if i === 0}<svg viewBox="0 0 16 16" width="16" height="16"><path d="M2.5 8l3.7 3.7L13.5 4.5" stroke="#fff" stroke-width="1.8" fill="none" /></svg>{/if}</span>Site {i + 1} - {s}
                  </div>
                {/each}
              </div>
              <div class="sb"><span>{@render icon('less', 14)}</span><i class="thumb small"></i><span class="end">{@render icon('more', 14)}</span></div>
            </div>
          </div>
        </div>

        <div class="panel hits">
          <div class="ph">
            <h2 class="hn">Hit navigator</h2>
            <span class="sel">None{@render icon('drop', 20)}</span>
            <span class="inp">{@render icon('search', 20)}<em>Search</em></span>
            <span class="swp">{@render icon('sweep', 20)}</span>
            <span class="flt">{@render icon('filter', 20)}
              <svg class="cursor" viewBox="0 0 16 21" width="16" height="21"><path d="M.5 .5v18.5l4-3 3 4.5 4-1.5-2-4h6z" fill="#000" stroke="#fff" stroke-width=".9" /></svg>
            </span>
          </div>
          <div class="thead">
            {#each heads as h}<span>{h}</span>{/each}
            <div class="lpc"><b class="half">L</b><b class="half">P</b><b>C</b></div>
          </div>
          <div class="scroll">
            <div class="rows">
              {#each hits as h, r}
                <div class="row">
                  <div class="idx"><span>1</span><i>{r < 19 ? r + 1 + '.' : ''}</i></div>
                  <div class="info">
                    <div class="top">
                      <span class="name">{h[0]}</span>
                      <span class="tgt" class:lit={r < 3}>{@render icon('target', 10)}</span>
                      <span class="letters">{#each 'ALPCSDV' as l}<b class="{letterState(r, l)} l{l}">{l}</b>{/each}</span>
                    </div>
                    <div class="stats">{#each h[1] as v}<span>{v}</span>{/each}</div>
                  </div>
                  <div class="arr">{#if r < 3}<span class:off={r === 0}>{@render icon('up', 13)}</span><span>{@render icon('down', 13)}</span>{/if}</div>
                  <div class="mol" class:violet={r === 0 || r === 2} class:cream={r === 1}>
                    <svg viewBox="974 {h[2] + 3} 450 144" width="149" height="48">
                      {#each drawings[r].lines as l}<line x1={l[0]} y1={l[1]} x2={l[2]} y2={l[3]} stroke={l[4]} stroke-width={l[5]} stroke-dasharray={l[6] || null} />{/each}
                      {#each drawings[r].texts as t}<text x={t[0]} y={t[1] + 6} fill={t[3]}>{t[2]}</text>{/each}
                    </svg>
                  </div>
                </div>
              {/each}
            </div>
            <div class="sb tall"><span>{@render icon('less', 14)}</span><i class="thumb big"></i><span class="end">{@render icon('more', 14)}</span></div>
          </div>
          <div class="foot"><i>TOTAL 154</i><span class="l1">LOAD NEXT 30</span><span class="l2">LOAD NEXT 100</span><span class="l3">LOAD FULL LIST</span></div>
        </div>
      </section>

      <section class="center">
        <svg class="viewer" viewBox="-425 6 1986 1811" preserveAspectRatio="none">
          <defs>
            <radialGradient id="ball" cx=".59" cy=".4" r=".58"><stop offset="0" stop-color="#242328" /><stop offset=".1" stop-color="#1b1a1e" /><stop offset=".4" stop-color="#141416" /><stop offset=".7" stop-color="#0b0b0d" /><stop offset=".88" stop-color="#060607" /><stop offset="1" stop-color="#010102" /></radialGradient>
            <linearGradient id="edge" x1="0" y1="0" x2="0" y2="1"><stop offset="0" stop-color="#160006" /><stop offset="1" stop-color="#260006" /></linearGradient>
            <filter id="soft" x="-20%" y="-20%" width="140%" height="140%"><feGaussianBlur stdDeviation="9" /></filter>
            <filter id="soft2" x="-20%" y="-20%" width="140%" height="140%"><feGaussianBlur stdDeviation="5" /></filter>
            <clipPath id="tailclip"><path d="M313 650L272 690 240 770 210 830 185 795 183 825 208 960 328 1245 344 1370 310 1460 245 1510 280 1510 340 1475 395 1410 410 1270 370 1150 318 1030 273 905 266 770z" /></clipPath>
          </defs>
          <rect x="-425" y="6" width="1986" height="1811" fill="#000" />
          <path d="M935 188L1010 158 1110 142 1207 95 1255 6h48L1235 118 1130 168 1020 171z" fill="#070100" />
          <path d="M370 485L385 465 527 410 670 411 800 428 948 416 1075 343 940 440 788 472 600 450 515 445z" fill="url(#edge)" />
          <g clip-path="url(#tailclip)">
            <rect x="150" y="640" width="280" height="880" fill="#080100" />
            <path d="M190 800L215 960 335 1245 350 1370 315 1460 240 1512" fill="none" stroke="#1a0008" stroke-width="56" filter="url(#soft)" />
            <path d="M190 810L214 960 334 1245 347 1370" fill="none" stroke="#33040f" stroke-width="22" filter="url(#soft2)" />
            <path d="M346 1370L312 1460 245 1510" fill="none" stroke="#1e0209" stroke-width="16" filter="url(#soft2)" />
          </g>
          <path d="M15 1398L70 1410 180 1460 250 1505 245 1515 190 1503 110 1440z" fill="#090100" />
          <path d="M208 890L220 960 285 1115" stroke="#4a0716" stroke-width="4" fill="none" opacity=".6" />
          <path d="M380 475L515 445 600 450 650 459 788 472 850 455 940 440 1080 340 1120 320 1152 296 1141 358 1000 495 950 534 860 553 780 575 605 556 512 541 400 565 276 688 235 795 210 830 206 877 189 825 189 795 235 630z" fill="#070707" />
          <path d="M1220 462L1325 464 1420 514 1478 590 1515 690 1524 855 1468 980 1375 1045 1220 1105 1110 1085 1030 1015 978 910 960 770 990 630 1065 538 1145 490z" fill="url(#ball)" />
        </svg>
        <div class="controls">
          <div class="group">
            <span>{@render icon('undo', 19)}</span><span>{@render icon('settings', 19)}</span><span>{@render icon('tv', 19)}</span><span>{@render icon('mouse', 20)}</span><span class="off">{@render icon('redo', 19)}</span>
          </div>
          <span class="restore">{@render icon('restore', 18)}<em>RESTORE CLIP/SLAB/CENTRE</em></span>
        </div>
      </section>

      <section class="right">
        <div class="vtabs"><span class="sel1">VECTOR<br />SELECTOR</span><span>SELECTED<br />COMPOUNDS</span></div>
        <div class="panel summary">
          <div class="ph"><h2>Summary Info</h2></div>
          <p>Number picked: 0</p><p>Number vectors explored: 0</p><p>Number series explored: 0</p><p>Estimated cost: £0</p><p>Selected Interaction: Not selected</p>
        </div>
        <div class="panel vec">
          <div class="ph"><h2>Not selected vector</h2></div>
          <div class="swatches"><span class="blue">Blue</span><span class="redsw">Red</span></div>
          <div class="vfoot"><span>{@render icon('selectAll', 20)}<em>SELECT ALL</em></span><span></span></div>
        </div>
      </section>

      <aside class="drawer">
        <div class="dh"><h2>Settings</h2>{@render icon('close', 20)}</div>
        <div class="line bg"><span>Background colour</span><span class="toggle"><i></i></span></div>
        {#each sliders.slice(0, 2) as s}
          <div class="line"><span>{s[0]}</span><div class="slider" style="--v:{s[1]}%"><i></i></div></div>
        {/each}
        <div class="line dist"><span>Clip dist</span>
          <div class="num"><span>10</span>
            <svg viewBox="0 0 14 18" width="14" height="18"><path d="M.5 .5h13v8H.5zM.5 9.5h13v8H.5z" fill="#eee" stroke="#aaa" /><path d="M4.5 6L7 3l2.5 3zM4.5 12L7 15l2.5-3z" /></svg>
          </div>
        </div>
        {#each sliders.slice(2) as s}
          <div class="line"><span>{s[0]}</span><div class="slider" style="--v:{s[1]}%"><i></i></div></div>
        {/each}
      </aside>
    </main>
  </div>
</div>

<style>
  :global(body) { background: #000; overflow: hidden; }
  * { box-sizing: border-box; }
  svg { flex: none; display: block; }
  em { font-style: normal; }
  h1, h2, p { margin: 0; }
  .screen { width: 2716px; height: 1575px; background: #000; padding: 0 6px 5px; font-family: Roboto, sans-serif; color: #263238; }
  .window { width: 2705px; height: 1570px; display: flex; flex-direction: column; background: #f5f9fa; border: solid #5b9bd5; border-width: 0 1px 1px 0; overflow: hidden; }

  .tabbar { height: 34px; background: #429eff; border-bottom: 1px solid #2a6cb4; padding-left: 39px; display: flex; flex: none; font: 11.8px 'Open Sans', sans-serif; letter-spacing: -.3px; color: #0c1d30; }
  .tab { width: 144.35px; height: 33px; border-left: 1px solid #2d72bd; display: flex; align-items: center; padding: 4px 8px 0 9px; flex: none; }
  .tab .fav { margin-right: 7px; }
  .tt { flex: 1; width: 0; white-space: pre; overflow: hidden; mask-image: linear-gradient(90deg, #000 78%, #0003 98%); height: 18px; line-height: 18px; }
  .tt.full { mask-image: none; }
  .tx { margin-left: 4px; margin-right: 4px; stroke: #17395e; stroke-width: 1.7; }
  .tab.active { background: #f9fbfa; height: 34px; border-top: 2px solid #1f7ac4; color: #000; padding-top: 3px; }
  .newtab { padding: 10px 0 0 10px; width: 90px; }
  .winbtns { display: flex; gap: 36px; padding-top: 12px; stroke: #000; }

  .toolbar { height: 41px; background: #f9fbfa; display: flex; align-items: center; flex: none; font-family: 'Open Sans', sans-serif; }
  .toolbar svg { fill: none; stroke: #4a4a4a; stroke-width: 1.8; }
  .toolbar svg text { stroke: none; }
  .toolbar svg.dim { stroke: #aaa; }
  .nav { width: 250px; display: flex; align-items: center; gap: 15px; padding-left: 3px; }
  .back { width: 34px; height: 34px; border: 1px solid #b5b5b5; border-radius: 50%; display: grid; place-items: center; background: #fff; margin-right: -8px; }
  .urlbar { width: 1430px; height: 30px; border: 1px solid #bcbcbc; border-radius: 2px; background: #fff; display: flex; align-items: center; padding-left: 7px; }
  .vline { width: 1px; height: 22px; background: #ccc; margin: 0 7px 0 7px; }
  .urlbar svg + svg { margin-left: 8px; }
  .url { font-size: 13px; color: #808080; margin-left: 7px; letter-spacing: -.06px; flex: 1; }
  .url b { font-weight: 400; color: #111; }
  .urlend { display: flex; gap: 4px; padding-right: 7px; }
  .searchbar { margin-left: 10px; width: 598px; height: 30px; border: 1px solid #bcbcbc; border-radius: 2px; background: #fff; display: flex; align-items: center; padding: 0 6px 0 8px; font-size: 13px; gap: 6px; color: #111; }
  .searchbar .go { margin-left: auto; }
  .tools { margin-left: 125px; display: flex; gap: 16px; align-items: center; }
  .tools svg { width: 16px; }
  .tools i { width: 1px; height: 34px; background: #ddd; margin: 0 -6px 0 -6px; }
  .burger { position: relative; padding-left: 2px; }
  .burger .warn { position: absolute; left: 11px; top: -7px; width: 12px; }

  .bookmarks { height: 28px; border-bottom: 1px solid #ddd; background: #f9fbfa; display: flex; align-items: center; padding-left: 11px; flex: none; font: 12px 'Open Sans', sans-serif; letter-spacing: -.4px; color: #111; }
  .bm { display: flex; align-items: center; gap: 4px; white-space: nowrap; flex: none; height: 18px; }
  .bm.sep { border-left: 1px solid #aaa; margin-left: -10px; padding-left: 9px; box-sizing: content-box; }

  .app { height: 44px; background: #fff; flex: none; display: flex; align-items: center; box-shadow: 0 2px 4px -1px #0006, 0 4px 5px #0004; position: relative; z-index: 2; }
  .hb { display: flex; align-items: center; font-size: 12.2px; font-weight: 500; letter-spacing: .1px; height: 36px; white-space: nowrap; }
  .hb em { margin-left: 8px; }
  .menu { width: 75px; padding-left: 9px; border-right: 1px solid #ccc; font-size: 11.6px; letter-spacing: 0; }
  .ind { color: #3f51b5; }
  h1 { font-size: 20.8px; font-weight: 400; height: 35px; line-height: 36px; width: 195px; padding-left: 5px; border-right: 1px solid #ccc; letter-spacing: -.05px; white-space: nowrap; }
  h1 b { font-weight: 700; }
  .save { width: 63px; padding-left: 3px; border-right: 1px solid #ccc; font-size: 11.8px; }
  .share { width: 72px; padding-left: 4px; border-right: 1px solid #ccc; font-size: 11.8px; letter-spacing: 0; }
  .save em, .share em { margin-left: 8px; }
  .dl { padding-left: 5px; letter-spacing: .18px; }
  .grow { flex: 1; }
  .tl { width: 109px; font-size: 11.8px; letter-spacing: 0; }
  .red { color: #d00; width: 126px; font-size: 11.8px; letter-spacing: -.05px; }
  .red em { margin-left: 6px; }
  .logos { margin-top: -1px; }
  .con { width: 144px; padding-left: 12px; font-size: 11.6px; letter-spacing: -.05px; }

  main { flex: 1; display: flex; position: relative; overflow: hidden; padding: 8px 0 7px 8px; }
  .panel { background: #fff; border-radius: 4px; box-shadow: 0 1px 3px #0005, 0 1px 1px #0003; overflow: hidden; }
  .ph { height: 40px; background: #3f51b5; color: #fff; display: flex; align-items: center; padding: 4px 8px 0; }
  h2 { font-size: 17.2px; font-weight: 500; letter-spacing: .15px; white-space: nowrap; }
  .left { width: 488px; display: flex; flex-direction: column; gap: 8px; flex: none; }
  .cluster { height: 220px; flex: none; }
  .clear { display: flex; align-items: center; margin-left: auto; font-size: 12px; font-weight: 500; gap: 7px; margin-right: 24px; }
  .cluster .ph { padding-right: 13px; }
  .cbody { display: flex; padding: 8px 0 0 12px; }
  .sites { position: relative; width: 275px; height: 160px; margin-top: 4px; border: 1px solid #ddd; display: flex; }
  .legend { position: absolute; left: 5px; top: -9px; background: #fff; padding: 0 2px; font-size: 13.6px; font-weight: 700; letter-spacing: .2px; line-height: 17px; }
  .slist { flex: 1; height: 158px; overflow: hidden; padding: 8px 0 0 11px; }
  .site { height: 22px; display: flex; align-items: center; font-size: 14px; white-space: nowrap; letter-spacing: 0; }
  .site.on { color: #3f51b5; }
  .cb { width: 16px; height: 16px; border: 1.5px solid #546e7a; border-radius: 2px; margin-right: 10px; flex: none; }
  .site.on .cb { background: #3f51b5; border: 0; }
  .sb { width: 16px; background: #f1f1f1; display: flex; flex-direction: column; align-items: center; color: #505050; flex: none; }
  .sb span { height: 17px; display: grid; place-items: center; }
  .sb .end { margin-top: auto; }
  .thumb { width: 15px; background: #cdcdcd; }
  .small { height: 44px; }
  .big { height: 125px; }

  .hits { flex: 1; display: flex; flex-direction: column; }
  .hits .ph { flex: none; padding-top: 0; align-items: flex-start; }
  .hn { width: 164px; line-height: 46px; }
  .sel { width: 87px; height: 36px; border-bottom: 1px solid #fff; display: flex; justify-content: space-between; align-items: center; font-size: 14px; padding-top: 8px; }
  .inp { margin-left: 16px; width: 116px; height: 36px; border-bottom: 1px solid #fff; display: flex; align-items: center; font-size: 14px; padding-top: 8px; gap: 8px; }
  .inp em { color: #9fa8da; }
  .swp { margin: 12px 0 0 21px; }
  .flt { position: relative; margin: 10px 0 0 24px; color: #9fa8da; }
  .cursor { position: absolute; left: 1px; top: 1px; }
  .thead { height: 38px; padding: 8px 0 2px 26px; display: flex; flex: none; }
  .thead span { width: 25px; height: 28px; border-right: 1px solid #ccc; font-size: 8.6px; font-weight: 700; line-height: 29px; white-space: nowrap; display: flex; justify-content: center; color: #111; letter-spacing: -.05px; padding-left: 4px; }
  .thead span:last-of-type { width: 26px; }
  .lpc { display: flex; height: 18px; width: 35px; margin: 6px 0 0 16px; border: 1px solid #3f51b5; }
  .lpc b { flex: 1; background: #c5cae9; font-size: 9.5px; text-align: center; line-height: 16px; border-left: 1px solid #3f51b5; color: #455; }
  .lpc b.half { background: #7986cb; color: #fff; }
  .scroll { display: flex; height: 1059px; flex: none; overflow: hidden; margin-top: -2px; padding-left: 10px; }
  .rows { width: 454px; padding-top: 2px; display: flex; flex-direction: column; gap: 4px; }
  .row { width: 451px; height: 50px; border: 1px solid #ccc; display: flex; flex: none; }
  .idx { width: 15px; background: #f5f9fa; border-right: 2px solid #ccc; display: flex; flex-direction: column; justify-content: space-between; align-items: center; font-size: 12.5px; line-height: 18px; color: #111; }
  .idx i { font-size: 7.5px; line-height: 17px; font-weight: 500; letter-spacing: -.1px; }
  .info { width: 265px; }
  .top { display: flex; height: 30px; }
  .name { width: 161px; font-size: 12.5px; font-weight: 500; color: #111; letter-spacing: .13px; line-height: 21px; white-space: nowrap; overflow: hidden; }
  .tgt { width: 12px; padding-top: 10px; color: #bbb; }
  .tgt.lit { color: #37474f; }
  .letters { display: flex; padding-top: 6px; height: 24px; }
  .letters b { width: 12px; height: 18px; background: #c5cae9; border: 1px solid #3f51b5; font-size: 9.5px; line-height: 16px; text-align: center; color: #37474f; margin-right: -.2px; }
  .letters .half { background: #7986cb; color: #fff; }
  .letters .on { background: #3f51b5; color: #fff; }
  .letters .ghost { border-color: #fff; color: #9fa8da; width: 12px; }
  .letters .lV { width: 13px; }
  .stats { display: flex; height: 18px; }
  .stats span { width: 25px; border-right: 1px solid #ccc; font-size: 12px; font-weight: 700; color: #111; line-height: 17px; padding-left: 1px; display: flex; justify-content: center; }
  .stats span:first-child { padding-left: 4px; }
  .stats span:last-child { border: 0; width: 33px; }
  .arr { width: 19px; border-left: 1px solid #ccc; display: flex; flex-direction: column; justify-content: space-between; align-items: center; color: #5c6bc0; padding: 4px 0; }
  .arr .off { color: #bbb; }
  .mol { width: 150px; border-left: 1px solid #ccc; }
  .mol text { font: 16px Roboto, sans-serif; text-anchor: middle; }
  .violet { background: #afafd7; }
  .cream { background: #faeab8; }
  .foot { display: flex; height: 34px; line-height: 33px; font-size: 12.5px; font-weight: 500; color: #3f51b5; padding-left: 8px; letter-spacing: .1px; white-space: nowrap; }
  .foot i { width: 162px; }
  .l1 { width: 93px; border-right: 1px solid #9fa8da; }
  .l2, .l3 { padding-left: 8px; }
  .l2 { width: 108px; border-right: 1px solid #9fa8da; }

  .center { margin-left: 20px; width: 1672px; flex: none; }
  .viewer { width: 1672px; height: 1362px; border-radius: 4px; box-shadow: 0 1px 3px #0007; }
  .controls { display: flex; padding: 8px 0 0 598px; gap: 64px; }
  .group { display: flex; border-radius: 4px; overflow: hidden; box-shadow: 0 2px 3px #0005; }
  .group span { width: 40px; height: 37px; background: #3f51b5; color: #fff; border-right: 1px solid #1a237e; display: grid; place-items: center; }
  .group .off { background: #d7dcdc; color: #a5a9a9; border: 0; }
  .restore { width: 212px; height: 37px; border-radius: 4px; background: #3f51b5; color: #fff; box-shadow: 0 2px 3px #0005; display: flex; align-items: center; padding-left: 5px; gap: 10px; font-size: 12.2px; font-weight: 500; letter-spacing: .15px; white-space: nowrap; }

  .right { margin-left: 20px; width: 480px; flex: none; display: flex; flex-direction: column; }
  .vtabs { display: flex; height: 48px; }
  .vtabs span { width: 119px; text-align: center; font-size: 11.3px; font-weight: 500; line-height: 20px; padding-top: 4px; color: #3f51b5; background: #e6eaea; }
  .vtabs .sel1 { background: #3f51b5; color: #fff; border-right: 1px solid #1a237e; border-radius: 4px 0 0 0; }
  .summary { height: 206px; border-radius: 0 0 4px 4px; flex: none; margin-bottom: 8px; }
  .summary .ph { margin-bottom: 8px; }
  .right .ph { padding-top: 0; }
  p { font-size: 12px; font-weight: 500; line-height: 19px; padding-left: 8px; letter-spacing: .05px; }
  .vec { flex: 1; display: flex; flex-direction: column; }
  .swatches { display: flex; padding: 8px 0 0 16px; gap: 19px; font-size: 14px; }
  .swatches span { padding-left: 9px; color: #0009; }
  .blue { width: 76px; height: 49px; border: 2px solid #3f51b5; background: #b3cde3; line-height: 62px; }
  .redsw { width: 76px; height: 45px; margin-top: 2px; background: #fbb4ae; line-height: 62px; border-bottom: 1px solid #0006; }
  .vfoot { margin-top: auto; display: flex; gap: 16px; padding: 0 0 16px 16px; }
  .vfoot span { width: 126px; height: 33px; background: #3f51b5; color: #fff; border-radius: 4px; box-shadow: 0 2px 3px #0005; display: flex; align-items: center; padding-left: 12px; gap: 8px; font-size: 12.2px; font-weight: 500; letter-spacing: .2px; white-space: nowrap; }

  .drawer { position: absolute; left: 2382px; top: 8px; bottom: 7px; width: 314px; background: #fff; border-radius: 4px; box-shadow: 0 0 100px 70px #00000080, 0 1px 3px #0005; font-size: 14px; }
  .dh { height: 40px; background: #2979ff; color: #fff; border-radius: 4px 4px 0 0; display: flex; align-items: center; justify-content: space-between; padding: 4px 13px 0 8px; margin-bottom: 16px; }
  .line { display: flex; height: 42px; padding-left: 8px; line-height: 20px; }
  .line > span:first-child { width: 74px; white-space: nowrap; }
  .line.bg { height: 32px; justify-content: space-between; padding-right: 23px; }
  .toggle { width: 28px; height: 10px; margin-top: 7px; border-radius: 5px; background: linear-gradient(90deg, transparent 8px, #9e9e9e 8px); }
  .toggle i { display: block; width: 16px; height: 16px; margin-top: -3px; border-radius: 50%; background: #fafafa; box-shadow: 0 1px 3px #0007; }
  .slider { width: 208px; height: 2px; margin-top: 13px; background: linear-gradient(90deg, #3f51b5 var(--v), #b2b9e1 var(--v)); }
  .slider i { display: block; width: 12px; height: 12px; border-radius: 50%; background: #3f51b5; position: relative; top: -5px; left: calc(var(--v) - 6px); }
  .line.dist { height: 37px; margin-top: -1px; }
  .num { width: 208px; height: 28px; border-bottom: 1px solid #8a8f91; display: flex; justify-content: space-between; line-height: 29px; padding-right: 1px; }
  .num svg { margin-top: 4px; }
</style>
